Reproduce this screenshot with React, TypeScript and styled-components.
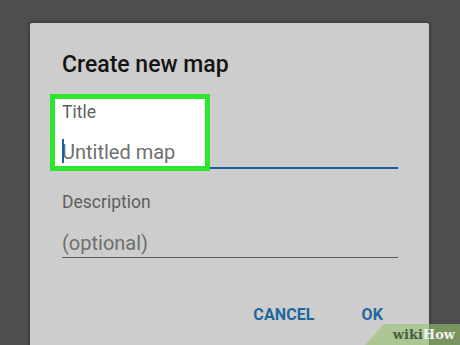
import React from "react";
import styled, { createGlobalStyle } from "styled-components";

const GlobalStyle = createGlobalStyle`
    html, body {
        margin: 0;
        padding: 0;
        background-color: #4e4e4e;
        overflow: hidden;
    }
    body {
        font-family: Roboto, "Liberation Sans", sans-serif;
    }
`;

const Screen = styled.div`
    position: relative;
    width: 460px;
    height: 345px;
    overflow: hidden;
    background-color: #4e4e4e;
`;

const Dialog = styled.div`
    margin: 23px 0 0 30px;
    width: 399px;
    height: 340px;
    box-sizing: border-box;
    padding: 28px 31px 0 32px;
    background-color: #cdcdcd;
    border-radius: 2px;
    box-shadow: 0 0 4px rgba(0, 0, 0, 0.45);
    display: flex;
    flex-direction: column;
`;

const Heading = styled.h2`
    margin: 0;
    font-size: 23px;
    line-height: 27px;
    font-weight: 500;
    color: #141414;
`;

const Field = styled.div<{ $top: number; $focused?: boolean }>`
    position: relative;
    margin-top: ${p => p.$top}px;
    padding-bottom: ${p => (p.$focused ? 3 : 2)}px;
    border-bottom: ${p => (p.$focused ? "2px solid #1d5f9e" : "1px solid #5a5a5a")};
`;

const Label = styled.div`
    position: relative;
    z-index: 1;
    font-size: 17.5px;
    line-height: 20px;
    color: #5f5f5f;
`;

const Value = styled.div<{ $gap: number }>`
    position: relative;
    z-index: 1;
    margin-top: ${p => p.$gap}px;
    font-size: 20px;
    line-height: 24px;
    color: #6f6f6f;
`;

const Caret = styled.span`
    position: absolute;
    left: 0;
    top: -1px;
    width: 2px;
    height: 24px;
    background-color: #1d5f9e;
`;

const Highlight = styled.div`
    position: absolute;
    left: -12px;
    top: -8px;
    width: 160px;
    height: 77px;
    box-sizing: border-box;
    border: 5px solid #2ee52e;
    background-color: #ffffff;
    z-index: 0;
    pointer-events: none;
`;

const Actions = styled.div`
    margin-top: 47px;
    margin-right: 15px;
    display: flex;
    justify-content: flex-end;
    gap: 47px;
`;

const Action = styled.button`
    border: none;
    background: none;
    padding: 0;
    font-family: Roboto, "Liberation Sans", sans-serif;
    font-size: 16px;
    line-height: 20px;
    font-weight: 700;
    color: #1f679c;
    letter-spacing: 0.1px;
`;

const Watermark = styled.div`
    position: absolute;
    right: 0;
    bottom: 0;
    width: 95px;
    height: 21px;
    background-color: rgba(150, 195, 110, 0.6);
    clip-path: polygon(19px 0, 100% 0, 100% 100%, 0 100%);
    display: flex;
    align-items: center;
    justify-content: flex-end;
    padding-right: 5px;
    box-sizing: border-box;
    font-family: "DejaVu Serif", "Liberation Serif", serif;
    font-weight: 700;
    font-size: 13px;
`;

const Wiki = styled.span`
    color: #4a5a42;
`;

const How = styled.span`
    color: #f2f2f2;
`;

export default function App() {
    return (
        <Screen>
            <GlobalStyle />
            <Dialog>
                <Heading>Create new map</Heading>
                <Field $top={24} $focused>
                    <Highlight />
                    <Label>Title</Label>
                    <Value $gap={18}>
                        <Caret />
                        Untitled map
                    </Value>
                </Field>
                <Field $top={23}>
                    <Label>Description</Label>
                    <Value $gap={19}>(optional)</Value>
                </Field>
                <Actions>
                    <Action>CANCEL</Action>
                    <Action>OK</Action>
                </Actions>
            </Dialog>
            <Watermark>
                <Wiki>wiki</Wiki>
                <How>How</How>
            </Watermark>
        </Screen>
    );
}
